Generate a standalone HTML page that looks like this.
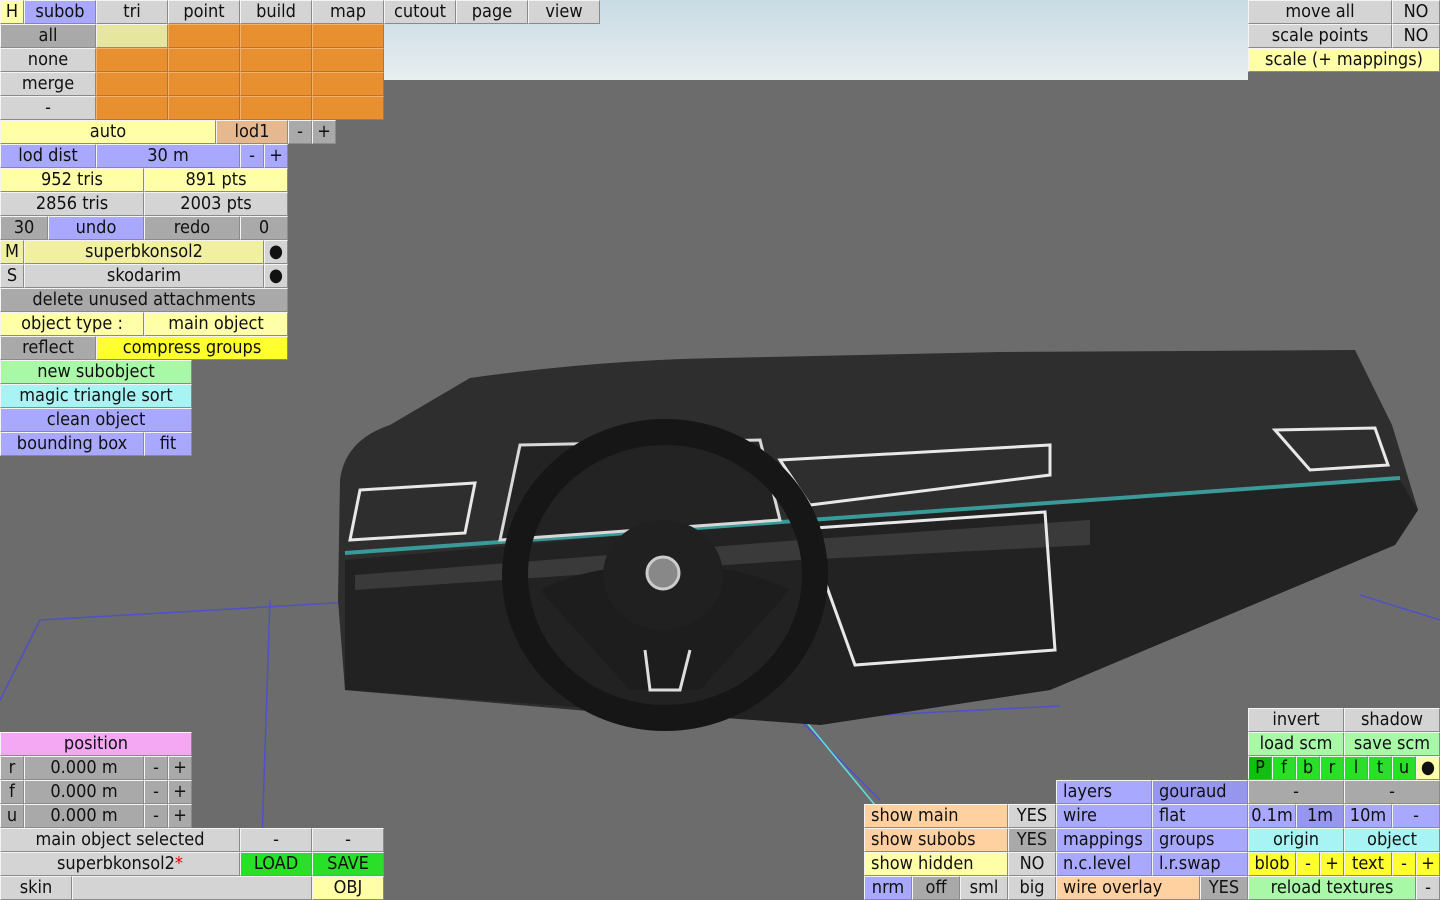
<!DOCTYPE html>
<html><head><meta charset="utf-8"><style>
body{margin:0;width:1440px;height:900px;overflow:hidden;background:#6c6c6c;position:relative;font-family:"DejaVu Sans Condensed","Liberation Sans",sans-serif;}
.b{position:absolute;height:22px;line-height:22px;font-size:18px;text-align:center;color:#111;box-sizing:border-box;border-right:1px solid #8a8a8a;border-bottom:1px solid #8a8a8a;border-top:1px solid #f4f4f4;border-left:1px solid #f4f4f4;height:24px;white-space:nowrap;overflow:hidden}
.l{text-align:left;padding-left:6px}
.g{background:#d4d4d4}.d{background:#a9a9a9}.y{background:#ffffa8}.yb{background:#ffff30}.bl{background:#a8a8ff}.db{background:#9696ee}
.o{background:#e8902f;border-color:#f0b070 #c07020 #c07020 #f0b070}.ly{background:#e6e6a0}.t{background:#e6b890}.gr{background:#a8f8a8}.G{background:#28e028}.GG{background:#10c010}
.c{background:#a8f4f4}.p{background:#f4a8f4}.or{background:#ffd0a0}.yl{background:#f0f0a0}
</style></head><body>
<div style="position:absolute;left:384px;top:0;width:864px;height:80px;background:linear-gradient(#c8dbe4,#e8eef0)"></div>
<svg style="position:absolute;left:0;top:0" width="1440" height="900">
<g stroke="#5050c8" stroke-width="1.5" fill="none">
<line x1="0" y1="700" x2="40" y2="620"/><line x1="40" y1="620" x2="560" y2="590"/><line x1="270" y1="600" x2="260" y2="900"/>
<line x1="1360" y1="595" x2="1440" y2="620"/><line x1="780" y1="700" x2="880" y2="800"/><line x1="860" y1="716" x2="1060" y2="706"/>
</g>
<line x1="780" y1="690" x2="875" y2="805" stroke="#60e0e0" stroke-width="1.5"/>
<path d="M340,480 Q345,440 390,425 L470,378 Q600,360 720,358 L1000,352 L1355,350 L1392,425 L1418,510 L1395,545 L1050,690 L820,725 L700,700 L600,712 L345,690 L338,600 Z" fill="#2e2e2e"/>
<polygon points="345,560 800,520 1400,480 1418,510 1395,545 1050,690 820,725 345,690" fill="#222"/>
<polygon points="355,575 800,540 1090,520 1090,545 800,560 355,590" fill="#3a3a3a"/>
<line x1="345" y1="553" x2="1400" y2="478" stroke="#3a9a9a" stroke-width="4"/>
<polygon points="360,490 475,483 465,533 350,540" fill="none" stroke="#e8e8e8" stroke-width="3"/>
<polygon points="780,460 1050,445 1050,475 810,505" fill="none" stroke="#e8e8e8" stroke-width="3"/>
<polygon points="1275,430 1375,428 1388,465 1310,470" fill="none" stroke="#e8e8e8" stroke-width="3"/>
<polygon points="815,528 1045,512 1055,650 855,665 810,540" fill="none" stroke="#e8e8e8" stroke-width="3"/>
<polygon points="520,445 760,440 780,520 500,540" fill="#232323" stroke="#d8d8d8" stroke-width="3"/>
<ellipse cx="665" cy="575" rx="150" ry="143" fill="none" stroke="#161616" stroke-width="26"/>
<path d="M540,590 Q600,560 665,570 Q730,560 790,590 L700,690 L630,690 Z" fill="#1d1d1d"/>
<path d="M645,650 L650,690 L680,690 L690,650" fill="none" stroke="#ddd" stroke-width="3"/>
<ellipse cx="663" cy="575" rx="60" ry="55" fill="#202020"/>
<circle cx="663" cy="573" r="16" fill="#888" stroke="#ccc" stroke-width="3"/>
</svg>
<div class="b y" style="left:0;top:0;width:24px">H</div><div class="b bl" style="left:24px;top:0;width:72px">subob</div>
<div class="b g" style="left:96px;top:0;width:72px">tri</div><div class="b g" style="left:168px;top:0;width:72px">point</div><div class="b g" style="left:240px;top:0;width:72px">build</div><div class="b g" style="left:312px;top:0;width:72px">map</div><div class="b g" style="left:384px;top:0;width:72px">cutout</div><div class="b g" style="left:456px;top:0;width:72px">page</div><div class="b g" style="left:528px;top:0;width:72px">view</div>
<div class="b d" style="left:0;top:24px;width:96px">all</div><div class="b g" style="left:0;top:48px;width:96px">none</div><div class="b g" style="left:0;top:72px;width:96px">merge</div><div class="b g" style="left:0;top:96px;width:96px">-</div>
<div class="b ly" style="left:96px;top:24px;width:72px"></div><div class="b o" style="left:168px;top:24px;width:72px"></div><div class="b o" style="left:240px;top:24px;width:72px"></div><div class="b o" style="left:312px;top:24px;width:72px"></div>
<div class="b o" style="left:96px;top:48px;width:72px"></div><div class="b o" style="left:168px;top:48px;width:72px"></div><div class="b o" style="left:240px;top:48px;width:72px"></div><div class="b o" style="left:312px;top:48px;width:72px"></div>
<div class="b o" style="left:96px;top:72px;width:72px"></div><div class="b o" style="left:168px;top:72px;width:72px"></div><div class="b o" style="left:240px;top:72px;width:72px"></div><div class="b o" style="left:312px;top:72px;width:72px"></div>
<div class="b o" style="left:96px;top:96px;width:72px"></div><div class="b o" style="left:168px;top:96px;width:72px"></div><div class="b o" style="left:240px;top:96px;width:72px"></div><div class="b o" style="left:312px;top:96px;width:72px"></div>
<div class="b y" style="left:0;top:120px;width:216px">auto</div><div class="b t" style="left:216px;top:120px;width:72px">lod1</div><div class="b d" style="left:288px;top:120px;width:24px">-</div><div class="b d" style="left:312px;top:120px;width:24px">+</div>
<div class="b bl" style="left:0;top:144px;width:96px">lod dist</div><div class="b bl" style="left:96px;top:144px;width:144px">30 m</div><div class="b bl" style="left:240px;top:144px;width:24px">-</div><div class="b bl" style="left:264px;top:144px;width:24px">+</div>
<div class="b y" style="left:0;top:168px;width:144px">952 tris</div><div class="b y" style="left:144px;top:168px;width:144px">891 pts</div>
<div class="b g" style="left:0;top:192px;width:144px">2856 tris</div><div class="b g" style="left:144px;top:192px;width:144px">2003 pts</div>
<div class="b d" style="left:0;top:216px;width:48px">30</div><div class="b bl" style="left:48px;top:216px;width:96px">undo</div><div class="b d" style="left:144px;top:216px;width:96px">redo</div><div class="b d" style="left:240px;top:216px;width:48px">0</div>
<div class="b yl" style="left:0;top:240px;width:24px">M</div><div class="b yl" style="left:24px;top:240px;width:240px">superbkonsol2</div><div class="b g" style="left:264px;top:240px;width:24px">●</div>
<div class="b g" style="left:0;top:264px;width:24px">S</div><div class="b g" style="left:24px;top:264px;width:240px">skodarim</div><div class="b g" style="left:264px;top:264px;width:24px">●</div>
<div class="b d" style="left:0;top:288px;width:288px">delete unused attachments</div>
<div class="b y" style="left:0;top:312px;width:144px">object type :</div><div class="b y" style="left:144px;top:312px;width:144px">main object</div>
<div class="b d" style="left:0;top:336px;width:96px">reflect</div><div class="b yb" style="left:96px;top:336px;width:192px">compress groups</div>
<div class="b gr" style="left:0;top:360px;width:192px">new subobject</div>
<div class="b c" style="left:0;top:384px;width:192px">magic triangle sort</div>
<div class="b bl" style="left:0;top:408px;width:192px">clean object</div>
<div class="b bl" style="left:0;top:432px;width:144px">bounding box</div><div class="b bl" style="left:144px;top:432px;width:48px">fit</div>
<div class="b g" style="left:1248px;top:0;width:144px">move all</div><div class="b g" style="left:1392px;top:0;width:48px">NO</div>
<div class="b g" style="left:1248px;top:24px;width:144px">scale points</div><div class="b g" style="left:1392px;top:24px;width:48px">NO</div>
<div class="b y" style="left:1248px;top:48px;width:192px">scale (+ mappings)</div>
<div class="b p" style="left:0;top:732px;width:192px">position</div>
<div class="b d" style="left:0;top:756px;width:24px">r</div><div class="b d" style="left:24px;top:756px;width:120px">0.000 m</div><div class="b d" style="left:144px;top:756px;width:24px">-</div><div class="b d" style="left:168px;top:756px;width:24px">+</div>
<div class="b d" style="left:0;top:780px;width:24px">f</div><div class="b d" style="left:24px;top:780px;width:120px">0.000 m</div><div class="b d" style="left:144px;top:780px;width:24px">-</div><div class="b d" style="left:168px;top:780px;width:24px">+</div>
<div class="b d" style="left:0;top:804px;width:24px">u</div><div class="b d" style="left:24px;top:804px;width:120px">0.000 m</div><div class="b d" style="left:144px;top:804px;width:24px">-</div><div class="b d" style="left:168px;top:804px;width:24px">+</div>
<div class="b g" style="left:0;top:828px;width:240px">main object selected</div><div class="b g" style="left:240px;top:828px;width:72px">-</div><div class="b g" style="left:312px;top:828px;width:72px">-</div>
<div class="b g" style="left:0;top:852px;width:240px">superbkonsol2<span style="color:#e00">*</span></div><div class="b G" style="left:240px;top:852px;width:72px">LOAD</div><div class="b G" style="left:312px;top:852px;width:72px">SAVE</div>
<div class="b g" style="left:0;top:876px;width:72px">skin</div><div class="b g" style="left:72px;top:876px;width:240px"></div><div class="b y" style="left:312px;top:876px;width:72px">OBJ</div>
<div class="b g" style="left:1248px;top:708px;width:96px">invert</div><div class="b g" style="left:1344px;top:708px;width:96px">shadow</div>
<div class="b gr" style="left:1248px;top:732px;width:96px">load scm</div><div class="b gr" style="left:1344px;top:732px;width:96px">save scm</div>
<div class="b GG" style="left:1248px;top:756px;width:24px">P</div><div class="b G" style="left:1272px;top:756px;width:24px">f</div><div class="b G" style="left:1296px;top:756px;width:24px">b</div><div class="b G" style="left:1320px;top:756px;width:24px">r</div><div class="b G" style="left:1344px;top:756px;width:24px">l</div><div class="b G" style="left:1368px;top:756px;width:24px">t</div><div class="b G" style="left:1392px;top:756px;width:24px">u</div><div class="b y" style="left:1416px;top:756px;width:24px">●</div>
<div class="b bl l" style="left:1056px;top:780px;width:96px">layers</div><div class="b db l" style="left:1152px;top:780px;width:96px">gouraud</div><div class="b d" style="left:1248px;top:780px;width:96px">-</div><div class="b d" style="left:1344px;top:780px;width:96px">-</div>
<div class="b or l" style="left:864px;top:804px;width:144px">show main</div><div class="b g" style="left:1008px;top:804px;width:48px">YES</div><div class="b bl l" style="left:1056px;top:804px;width:96px">wire</div><div class="b bl l" style="left:1152px;top:804px;width:96px">flat</div><div class="b bl" style="left:1248px;top:804px;width:48px">0.1m</div><div class="b db" style="left:1296px;top:804px;width:48px">1m</div><div class="b bl" style="left:1344px;top:804px;width:48px">10m</div><div class="b bl" style="left:1392px;top:804px;width:48px">-</div>
<div class="b or l" style="left:864px;top:828px;width:144px">show subobs</div><div class="b d" style="left:1008px;top:828px;width:48px">YES</div><div class="b bl l" style="left:1056px;top:828px;width:96px">mappings</div><div class="b bl l" style="left:1152px;top:828px;width:96px">groups</div><div class="b c" style="left:1248px;top:828px;width:96px">origin</div><div class="b c" style="left:1344px;top:828px;width:96px">object</div>
<div class="b y l" style="left:864px;top:852px;width:144px">show hidden</div><div class="b g" style="left:1008px;top:852px;width:48px">NO</div><div class="b bl l" style="left:1056px;top:852px;width:96px">n.c.level</div><div class="b bl l" style="left:1152px;top:852px;width:96px">l.r.swap</div><div class="b yb" style="left:1248px;top:852px;width:48px">blob</div><div class="b yb" style="left:1296px;top:852px;width:24px">-</div><div class="b yb" style="left:1320px;top:852px;width:24px">+</div><div class="b yb" style="left:1344px;top:852px;width:48px">text</div><div class="b yb" style="left:1392px;top:852px;width:24px">-</div><div class="b yb" style="left:1416px;top:852px;width:24px">+</div>
<div class="b bl" style="left:864px;top:876px;width:48px">nrm</div><div class="b d" style="left:912px;top:876px;width:48px">off</div><div class="b g" style="left:960px;top:876px;width:48px">sml</div><div class="b g" style="left:1008px;top:876px;width:48px">big</div><div class="b or l" style="left:1056px;top:876px;width:144px">wire overlay</div><div class="b d" style="left:1200px;top:876px;width:48px">YES</div><div class="b gr" style="left:1248px;top:876px;width:168px">reload textures</div><div class="b g" style="left:1416px;top:876px;width:24px">-</div>
</body></html>
